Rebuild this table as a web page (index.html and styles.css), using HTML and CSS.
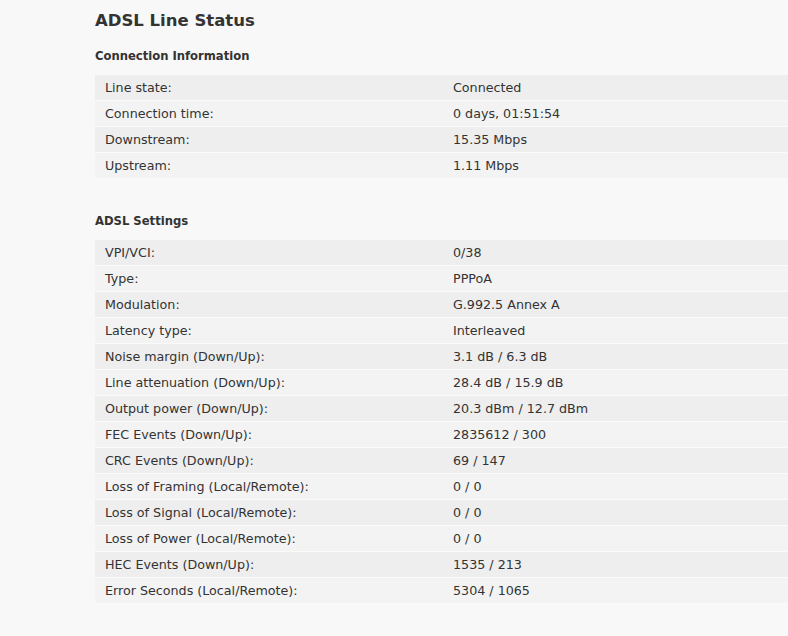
FILE: index.html
```html
<!DOCTYPE html>
<html>
<head>
<meta charset="utf-8">
<link rel="stylesheet" href="styles.css">
</head>
<body>
<div class="page">
  <h1 class="title">ADSL Line Status</h1>
  <h2 class="section">Connection Information</h2>
  <table class="info">
    <tr><td class="label">Line state:</td><td>Connected</td></tr>
    <tr><td class="label">Connection time:</td><td>0 days, 01:51:54</td></tr>
    <tr><td class="label">Downstream:</td><td>15.35 Mbps</td></tr>
    <tr><td class="label">Upstream:</td><td>1.11 Mbps</td></tr>
  </table>
  <h2 class="section section-gap">ADSL Settings</h2>
  <table class="info">
    <tr><td class="label">VPI/VCI:</td><td>0/38</td></tr>
    <tr><td class="label">Type:</td><td>PPPoA</td></tr>
    <tr><td class="label">Modulation:</td><td>G.992.5 Annex A</td></tr>
    <tr><td class="label">Latency type:</td><td>Interleaved</td></tr>
    <tr><td class="label">Noise margin (Down/Up):</td><td>3.1 dB / 6.3 dB</td></tr>
    <tr><td class="label">Line attenuation (Down/Up):</td><td>28.4 dB / 15.9 dB</td></tr>
    <tr><td class="label">Output power (Down/Up):</td><td>20.3 dBm / 12.7 dBm</td></tr>
    <tr><td class="label">FEC Events (Down/Up):</td><td>2835612 / 300</td></tr>
    <tr><td class="label">CRC Events (Down/Up):</td><td>69 / 147</td></tr>
    <tr><td class="label">Loss of Framing (Local/Remote):</td><td>0 / 0</td></tr>
    <tr><td class="label">Loss of Signal (Local/Remote):</td><td>0 / 0</td></tr>
    <tr><td class="label">Loss of Power (Local/Remote):</td><td>0 / 0</td></tr>
    <tr><td class="label">HEC Events (Down/Up):</td><td>1535 / 213</td></tr>
    <tr><td class="label">Error Seconds (Local/Remote):</td><td>5304 / 1065</td></tr>
  </table>
</div>
</body>
</html>
```

FILE: styles.css
```css
html, body {
  margin: 0;
  padding: 0;
  background: #f8f8f8;
  overflow: hidden;
}
body {
  font-family: "DejaVu Sans", Verdana, sans-serif;
  color: #333333;
  font-size: 12.7px;
}
.page {
  padding: 11px 0 0 95px;
  width: 720px;
}
.title {
  font-size: 16.5px;
  font-weight: bold;
  margin: 0;
  line-height: 20px;
}
.section {
  font-size: 11.6px;
  font-weight: bold;
  margin: 15px 0 0 0;
  line-height: 20px;
}
.section-gap {
  margin-top: 32px;
}
.info {
  border-collapse: collapse;
  width: 720px;
  margin-top: 9px;
}
.info td {
  height: 25px;
  padding: 1px 10px 0 10px;
  border-bottom: 1px solid #fafafa;
  vertical-align: middle;
  line-height: 24px;
  box-sizing: border-box;
}
.info td.label {
  width: 348px;
}
.info tr:nth-child(odd) td {
  background: #eeeeee;
}
.info tr:nth-child(even) td {
  background: #f3f3f3;
}
```
